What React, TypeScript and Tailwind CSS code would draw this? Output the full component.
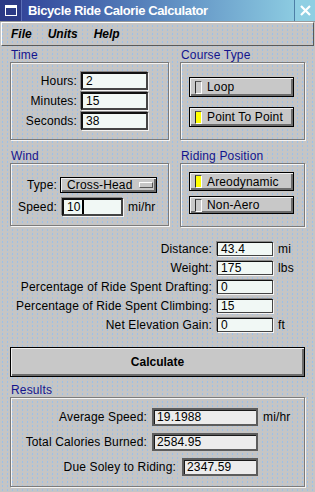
import React from 'react';

const etched = 'border border-[#7b7b7b] shadow-[inset_1px_1px_0_#f4f4f4,1px_1px_0_#f4f4f4]';
const entry =
  'flex items-center pl-[3px] border-2 border-t-[#111] border-l-[#111] border-r-[#444] border-b-[#444] bg-[#f1f8f5] shadow-[1px_1px_0_#f4f4f4,-1px_-1px_0_#888]';
const readout =
  'flex items-center pl-[3px] border-2 border-[#5c5c5c] bg-[#ececec] shadow-[inset_1px_1px_0_#1a1a1a]';
const raised = 'border border-black bg-[#c8c8c8] shadow-[inset_1px_1px_0_#f2f2f2,inset_-2px_-2px_0_#6c6c6c]';

function GroupLabel({ children }: { children: React.ReactNode }) {
  return <div className="h-[14px] leading-[14px] pl-px text-[#14148c]">{children}</div>;
}

function Toggle({ label, on, h = 'h-[20px]' }: { label: string; on?: boolean; h?: string }) {
  return (
    <div className={`${raised} ${h} w-[105px] flex items-center`}>
      <span
        className={`ml-[5px] w-[7px] h-[13px] border-l border-t border-l-[#2a2a2a] border-t-[#555] border-r border-b border-r-white border-b-white ${
          on ? 'bg-[#ffff00]' : 'bg-[#c9c9c9]'
        }`}
      />
      <span className="ml-[5px]">{label}</span>
    </div>
  );
}

const timeRows = [
  ['Hours', '2'],
  ['Minutes', '15'],
  ['Seconds', '38'],
];

const rideRows = [
  ['Distance', '43.4', 'mi'],
  ['Weight', '175', 'lbs'],
  ['Percentage of Ride Spent Drafting', '0', ''],
  ['Percentage of Ride Spent Climbing', '15', ''],
  ['Net Elevation Gain', '0', 'ft'],
];

export default function App() {
  return (
    <div className="w-[315px] h-[492px] overflow-hidden bg-[#c5c5c5] bg-[radial-gradient(circle,#9dc0e8_0.6px,transparent_0.9px)] bg-[length:5px_4px] font-['Liberation_Sans',Arial,sans-serif] text-[12px] tracking-[0.15px] text-black">
      {/* title bar */}
      <div className="flex h-[21px]">
        <div className="w-[22px] flex items-center justify-center bg-[#2c3a86] border-r border-[#5b6fb6]">
          <svg width="12" height="11" viewBox="0 0 12 11">
            <rect x="0.5" y="0.5" width="11" height="10" fill="none" stroke="#fff" />
            <rect x="0" y="0" width="12" height="3" fill="#fff" />
          </svg>
        </div>
        <div className="flex-1 flex items-center pl-[6px] bg-gradient-to-r from-[#33469a] to-[#8ccbe1] text-white font-bold text-[13px] tracking-[-0.4px]">
          Bicycle Ride Calorie Calculator
        </div>
        <div className="w-[21px] flex items-center justify-center bg-[#8fcfe3] border-l border-[#4d7fa6]">
          <svg width="11" height="11" viewBox="0 0 11 11">
            <path d="M1 1L10 10M10 1L1 10" stroke="#fff" strokeWidth="2.2" />
          </svg>
        </div>
      </div>
      <div className="h-px bg-[#9a9a9a]" />

      {/* menu bar */}
      <div className="mx-px h-[24px] flex items-center gap-[16px] pl-[9px] border border-t-white border-l-white border-b-[#5a5a5a] border-r-[#5a5a5a] italic font-bold text-[12px] tracking-normal">
        <span>File</span>
        <span>Units</span>
        <span>Help</span>
      </div>

      <div className="px-[10px]">
        {/* time / course type */}
        <div className="mt-[2px] flex gap-[11px]">
          <div className="w-[159px]">
            <GroupLabel>Time</GroupLabel>
            <div className={`${etched} h-[78px] pt-[9px] flex flex-col gap-[2px]`}>
              {timeRows.map(([l, v]) => (
                <div key={l} className="flex items-center h-[18px]">
                  <span className="w-[66px] text-right">{l}:</span>
                  <span className={`${entry} ml-[4px] w-[67px] h-[18px]`}>{v}</span>
                </div>
              ))}
            </div>
          </div>
          <div className="w-[125px]">
            <GroupLabel>Course Type</GroupLabel>
            <div className={`${etched} h-[78px] pt-[14px] pl-[8px] flex flex-col gap-[10px]`}>
              <Toggle label="Loop" />
              <Toggle label="Point To Point" on />
            </div>
          </div>
        </div>

        {/* wind / riding position */}
        <div className="mt-[9px] flex gap-[11px]">
          <div className="w-[159px]">
            <GroupLabel>Wind</GroupLabel>
            <div className={`${etched} h-[63px] pt-[13px] flex flex-col gap-[5px]`}>
              <div className="flex items-center h-[16px]">
                <span className="w-[46px] text-right">Type:</span>
                <div className={`${raised} ml-[3px] w-[97px] h-[16px] flex items-center justify-between pl-[6px] pr-[3px]`}>
                  <span>Cross-Head</span>
                  <span className="w-[14px] h-[6px] border border-t-white border-l-white border-b-[#555] border-r-[#555] bg-[#c6c6c6]" />
                </div>
              </div>
              <div className="flex items-center h-[18px]">
                <span className="w-[46px] text-right">Speed:</span>
                <span className={`${entry} ml-[5px] w-[61px] h-[18px]`}>
                  10<span className="ml-[1px] w-[2px] h-[14px] bg-black" />
                </span>
                <span className="ml-[5px]">mi/hr</span>
              </div>
            </div>
          </div>
          <div className="w-[125px]">
            <GroupLabel>Riding Position</GroupLabel>
            <div className={`${etched} h-[64px] pt-[8px] pl-[8px] flex flex-col gap-[5px]`}>
              <Toggle label="Areodynamic" on h="h-[19px]" />
              <Toggle label="Non-Aero" h="h-[18px]" />
            </div>
          </div>
        </div>

        {/* ride details */}
        <div className="mt-[15px] flex flex-col gap-[5px]">
          {rideRows.map(([l, v, u]) => (
            <div key={l} className="flex items-center h-[14px]">
              <span className="w-[202px] text-right whitespace-nowrap">{l}:</span>
              <span className={`${entry} ml-[5px] w-[56px] h-[14px] border-[1.5px]`}>{v}</span>
              <span className="ml-[5px]">{u}</span>
            </div>
          ))}
        </div>

        <button className={`${raised} mt-[15px] w-full h-[30px] flex items-center justify-center font-bold text-[12px] tracking-normal`}>
          Calculate
        </button>

        {/* results */}
        <div className="mt-[6px]">
          <GroupLabel>Results</GroupLabel>
          <div className={`${etched} h-[90px] pt-[10px] flex flex-col gap-[7px]`}>
            <div className="flex items-center h-[18px]">
              <span className="flex-1 text-right">Average Speed:</span>
              <span className={`${readout} ml-[5px] w-[106px] h-[18px]`}>19.1988</span>
              <span className="w-[46px] pl-[5px]">mi/hr</span>
            </div>
            <div className="flex items-center h-[18px]">
              <span className="flex-1 text-right">Total Calories Burned:</span>
              <span className={`${readout} ml-[5px] w-[106px] h-[18px]`}>2584.95</span>
              <span className="w-[46px]" />
            </div>
            <div className="flex items-center h-[18px]">
              <span className="flex-1 text-right">Due Soley to Riding:</span>
              <span className={`${readout} ml-[6px] w-[76px] h-[18px]`}>2347.59</span>
              <span className="w-[46px]" />
            </div>
          </div>
        </div>
      </div>
    </div>
  );
}
